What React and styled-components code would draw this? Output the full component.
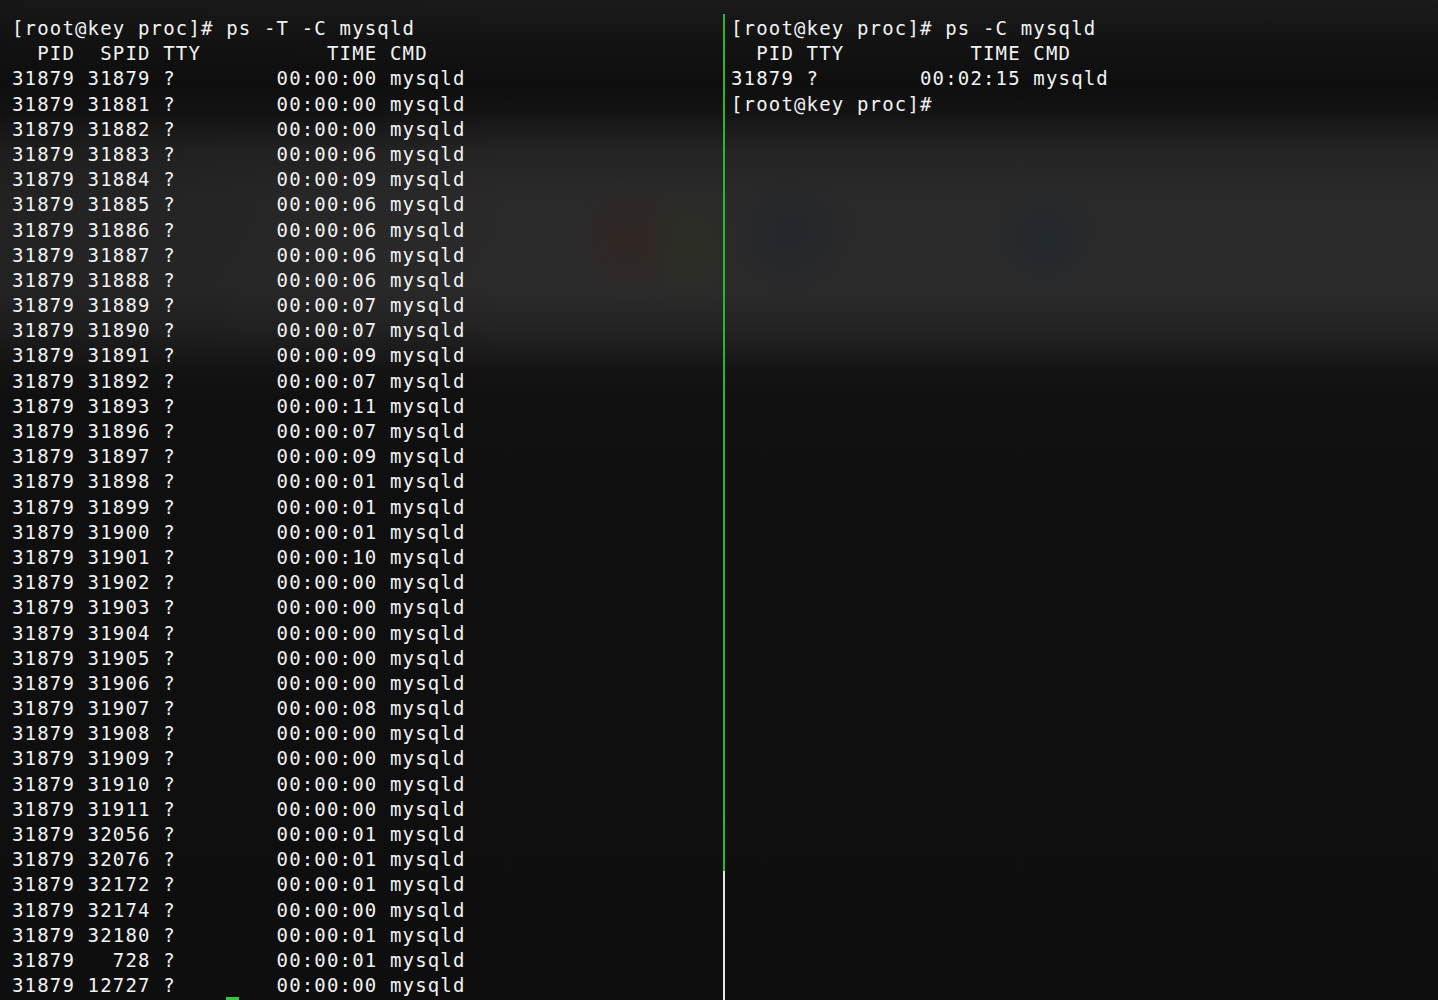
import React from "react";
import styled, { createGlobalStyle } from "styled-components";

const GlobalStyle = createGlobalStyle`
  html, body {
    margin: 0;
    padding: 0;
    background: #0f0f0f;
  }
`;

const threads = [
  ["31879", "00:00:00"],
  ["31881", "00:00:00"],
  ["31882", "00:00:00"],
  ["31883", "00:00:06"],
  ["31884", "00:00:09"],
  ["31885", "00:00:06"],
  ["31886", "00:00:06"],
  ["31887", "00:00:06"],
  ["31888", "00:00:06"],
  ["31889", "00:00:07"],
  ["31890", "00:00:07"],
  ["31891", "00:00:09"],
  ["31892", "00:00:07"],
  ["31893", "00:00:11"],
  ["31896", "00:00:07"],
  ["31897", "00:00:09"],
  ["31898", "00:00:01"],
  ["31899", "00:00:01"],
  ["31900", "00:00:01"],
  ["31901", "00:00:10"],
  ["31902", "00:00:00"],
  ["31903", "00:00:00"],
  ["31904", "00:00:00"],
  ["31905", "00:00:00"],
  ["31906", "00:00:00"],
  ["31907", "00:00:08"],
  ["31908", "00:00:00"],
  ["31909", "00:00:00"],
  ["31910", "00:00:00"],
  ["31911", "00:00:00"],
  ["32056", "00:00:01"],
  ["32076", "00:00:01"],
  ["32172", "00:00:01"],
  ["32174", "00:00:00"],
  ["32180", "00:00:01"],
  ["728", "00:00:01"],
  ["12727", "00:00:00"],
];

const App = () => (
  <>
    <GlobalStyle />
    <Screen>
      <Pane $left={12}>
        <Line>[root@key proc]# ps -T -C mysqld</Line>
        <Line>{"  PID  SPID TTY          TIME CMD"}</Line>
        {threads.map(([spid, time]) => (
          <Line key={spid}>{`31879 ${spid.padStart(5, " ")} ?        ${time} mysqld`}</Line>
        ))}
        <Line>
          {" ".repeat(17)}
          <Cursor />
        </Line>
      </Pane>
      <Divider>
        <Segment $color="#2db52d" $height="857px" />
        <Segment $color="#e6e6e6" />
      </Divider>
      <Pane $left={6}>
        <Line>[root@key proc]# ps -C mysqld</Line>
        <Line>{"  PID TTY          TIME CMD"}</Line>
        <Line>{"31879 ?        00:02:15 mysqld"}</Line>
        <Line>[root@key proc]#</Line>
      </Pane>
    </Screen>
  </>
);
export default App;

const Screen = styled.div`
  display: grid;
  grid-template-columns: 723px 2px 1fr;
  height: 1000px;
  overflow: hidden;
  background:
    radial-gradient(ellipse 55px 70px at 630px 240px, rgba(70, 26, 20, 0.25), transparent),
    radial-gradient(ellipse 50px 70px at 690px 245px, rgba(50, 58, 20, 0.25), transparent),
    radial-gradient(ellipse 70px 70px at 790px 235px, rgba(25, 30, 45, 0.35), transparent),
    radial-gradient(ellipse 60px 60px at 1045px 240px, rgba(22, 36, 50, 0.35), transparent),
    linear-gradient(to right, rgba(14, 14, 14, 0.3) 0, rgba(14, 14, 14, 0) 520px),
    linear-gradient(
      to bottom,
      #1b1b1b 0,
      #131313 40px,
      #0e0e0e 85px,
      #141414 115px,
      #242424 150px,
      #2a2a2a 195px,
      #2b2b2b 290px,
      #232323 330px,
      #141414 370px,
      #101010 400px,
      #0e0e0e 1000px
    );
`;

const Pane = styled.div`
  padding: 16px 0 0 ${(p) => p.$left}px;
  min-width: 0;
  overflow: hidden;
`;

const Line = styled.div`
  height: 25.2px;
  line-height: 25.2px;
  white-space: pre;
  font-family: "DejaVu Sans Mono", "Liberation Mono", monospace;
  font-size: 19px;
  letter-spacing: 1.16px;
  color: #f2f2f2;
`;

const Cursor = styled.span`
  display: inline-block;
  width: 12.6px;
  height: 22px;
  vertical-align: top;
  margin-top: -1px;
  background: #3cc43c;
`;

const Divider = styled.div`
  display: flex;
  flex-direction: column;
  padding-top: 14px;
`;

const Segment = styled.div`
  flex: ${(p) => (p.$height ? `0 0 ${p.$height}` : "1")};
  background: ${(p) => p.$color};
`;
